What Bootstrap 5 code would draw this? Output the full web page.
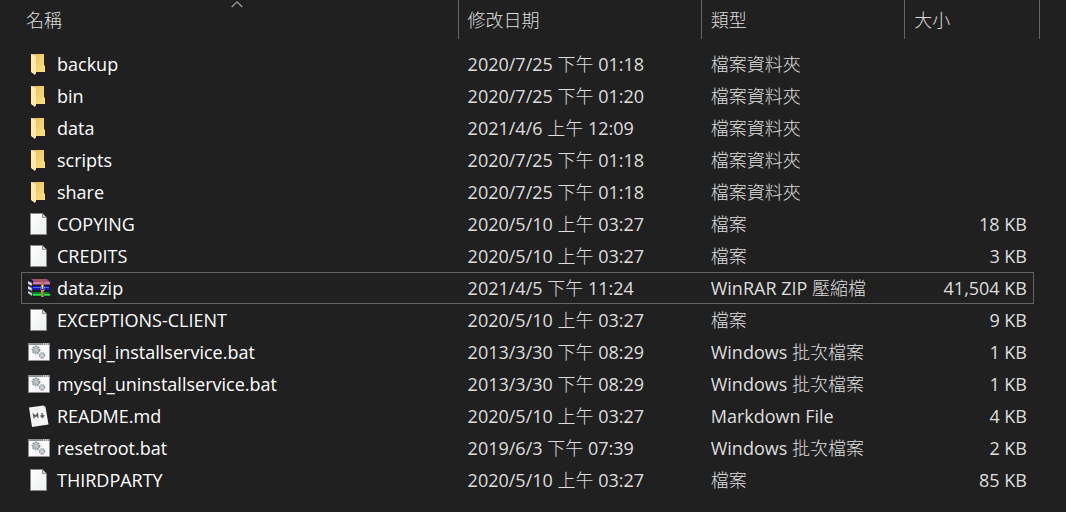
<!DOCTYPE html>
<html lang="zh-Hant">
<head>
<meta charset="utf-8">
<meta name="viewport" content="width=device-width, initial-scale=1">
<title>檔案總管</title>
<link href="https://cdn.jsdelivr.net/npm/bootstrap@5.3.0/dist/css/bootstrap.min.css" rel="stylesheet">
<style>
body{background:#202020;color:#dedede;font-family:"Open Sans","Noto Sans CJK TC Light","Noto Sans CJK TC",sans-serif;font-size:18px;line-height:24px}
.files{margin-left:21px;margin-right:32px}
.files table{table-layout:fixed;border-collapse:separate;border-spacing:0}
.c-name{width:43.1%}.c-date{width:24%}.c-type{width:20.1%}
.files th{height:39px;padding:0;font-weight:400;position:relative}
.files th+th{border-left:1px solid #636363}
.files th:last-child::after{content:"";position:absolute;top:0;bottom:0;right:-6px;width:1px;background:#636363}
.files th button{color:#dedede;padding:0 9px}
.files th:first-child button{padding:0 5px}
.sort-mark{position:absolute;top:1px;left:49.5%;transform:translateX(-50%)}
.list-rows::before{content:"";display:block;height:9px}
.files td{height:32px;padding:0 0 0 10px;white-space:nowrap;border:1px solid transparent;border-width:1px 0}
.files td:first-child{padding-left:5px;color:#fff;border-left-width:1px}
.files td:last-child{padding:0 6px 0 0;border-right-width:1px}
.files tr.focused td{border-color:#636363}
.ico{width:24px;height:24px;flex:none}
.name-cell{gap:6px}
</style>
</head>
<body>
<svg class="position-absolute" width="0" height="0" aria-hidden="true">
<defs>
<linearGradient id="gBack" x1="0" x2="1" y2="1"><stop stop-color="#e9bd58"/><stop offset="1" stop-color="#ffe287"/></linearGradient>
<linearGradient id="gPage" x2="1" y2="1"><stop stop-color="#fff"/><stop offset="1" stop-color="#eceeef"/></linearGradient>
</defs>
<symbol id="folder" viewBox="0 0 24 24"><path d="M4 2h13v11l1 1v6H5z" fill="url(#gBack)"/><path d="M4 2l5 2v17l-1 2-4-3z" fill="#ffe9ac"/></symbol>
<symbol id="page" viewBox="0 0 24 24"><path d="M3.500 1.500h12l4 4v17h-16z" fill="url(#gPage)" stroke="#8a8a8a"/><path d="M15.500 1.500v4h4z" fill="#dcdcdc" stroke="#8a8a8a"/></symbol>
<symbol id="bat" viewBox="0 0 24 24"><path d="M1.500 3.500h21v17h-21z" fill="#fafafa" stroke="#8c9093"/><path d="M1 3h22v2H1z" fill="#8c9093"/><path d="M16 4h1m1 0h1m1 0h1" stroke="#fff"/>
<circle cx="9" cy="10" r="3.500" fill="#c4cdd2" stroke="#8b979e" stroke-width="1.800" stroke-dasharray="1.700 .8"/><circle cx="9" cy="10" r="1.300" fill="#fff" stroke="#7f8c94" stroke-width=".7"/>
<circle cx="15" cy="15.500" r="2.500" fill="#dce2e5" stroke="#8b979e" stroke-width="1.500" stroke-dasharray="1.300 .7"/><circle cx="15" cy="15.500" r="1.100" fill="#fff" stroke="#8b979e" stroke-width=".6"/></symbol>
<symbol id="md" viewBox="0 0 24 24"><path d="M2 3.500L16.500 1.500l2 1.500 3 17.500-16.500 2.500z" fill="#f4f4f4"/><path d="M16.500 1.500l2 1.800-1.800.4z" fill="#c8c8c8"/><path d="M7.200 14.500l-.7-4 2.300 2 1.600-2.600.7 4M15 9l.5 4m-2-1.500l2.100 2 1.500-2.500" fill="none" stroke="#555" stroke-width="1.300"/></symbol>
<symbol id="rar" viewBox="0 0 24 24">
<path d="M1 5l3-2h16l3 2v16H5l-4-4z" fill="#191726"/>
<path d="M4 3h16l3 3H7z" fill="#a04c83"/><path d="M6 6h17v2.500H6z" fill="#d477a9"/>
<path d="M5 10h17l1 4H6z" fill="#1717c5"/><path d="M6 11h16v1H6z" fill="#4a65ff"/>
<path d="M5 16h17l1 4H6z" fill="#087d28"/><path d="M6 18h17v1.500H6z" fill="#28ec4a"/>
<path d="M1 5l4 2v3l-4-2m0 2l4 2v3l-4-2m0 2l4 2v3l-4-3" fill="#e4e1e8" stroke="#6e6a76" stroke-width=".6"/>
<path d="M12 3h3l2 3v15h-3V7z" fill="#a26332"/><path d="M15 6v4m0 5v6" stroke="#d5a258"/><path d="M14 10.500h3v4h-3z" fill="#302315" stroke="#cfae74" stroke-width=".8"/><path d="M15.500 9v4" stroke="#ddd"/></symbol>
</svg>
<main class="files">
<table class="w-100">
<colgroup><col class="c-name"><col class="c-date"><col class="c-type"><col></colgroup>
<thead><tr>
<th scope="col" aria-sort="ascending"><svg class="sort-mark" width="12" height="7" viewBox="0 0 12 7" aria-hidden="true"><path d="M.7 6L6 .9 11.300 6" fill="none" stroke="#a0a0a0" stroke-width="1.200"/></svg><button type="button" class="border-0 bg-transparent">名稱</button></th>
<th scope="col"><button type="button" class="border-0 bg-transparent">修改日期</button></th>
<th scope="col"><button type="button" class="border-0 bg-transparent">類型</button></th>
<th scope="col"><button type="button" class="border-0 bg-transparent">大小</button></th>
</tr></thead>
<tbody class="list-rows" id="rows"></tbody>
</table>
</main>
<script src="https://cdn.jsdelivr.net/npm/bootstrap@5.3.0/dist/js/bootstrap.bundle.min.js"></script>
<script>
const files = [
["folder","backup","2020/7/25 下午 01:18","檔案資料夾",""],
["folder","bin","2020/7/25 下午 01:20","檔案資料夾",""],
["folder","data","2021/4/6 上午 12:09","檔案資料夾",""],
["folder","scripts","2020/7/25 下午 01:18","檔案資料夾",""],
["folder","share","2020/7/25 下午 01:18","檔案資料夾",""],
["page","COPYING","2020/5/10 上午 03:27","檔案","18 KB"],
["page","CREDITS","2020/5/10 上午 03:27","檔案","3 KB"],
["rar","data.zip","2021/4/5 下午 11:24","WinRAR ZIP 壓縮檔","41,504 KB"],
["page","EXCEPTIONS-CLIENT","2020/5/10 上午 03:27","檔案","9 KB"],
["bat","mysql_installservice.bat","2013/3/30 下午 08:29","Windows 批次檔案","1 KB"],
["bat","mysql_uninstallservice.bat","2013/3/30 下午 08:29","Windows 批次檔案","1 KB"],
["md","README.md","2020/5/10 上午 03:27","Markdown File","4 KB"],
["bat","resetroot.bat","2019/6/3 下午 07:39","Windows 批次檔案","2 KB"],
["page","THIRDPARTY","2020/5/10 上午 03:27","檔案","85 KB"]
];
document.getElementById("rows").innerHTML = files.map(([icon,name,date,type,size]) =>
`<tr class="${name==="data.zip"?"focused":""}"><td><div class="name-cell d-flex align-items-center"><svg class="ico" aria-hidden="true"><use href="#${icon}"/></svg><span>${name}</span></div></td><td>${date}</td><td>${type}</td><td class="text-end">${size}</td></tr>`).join("");
</script>
</body>
</html>
